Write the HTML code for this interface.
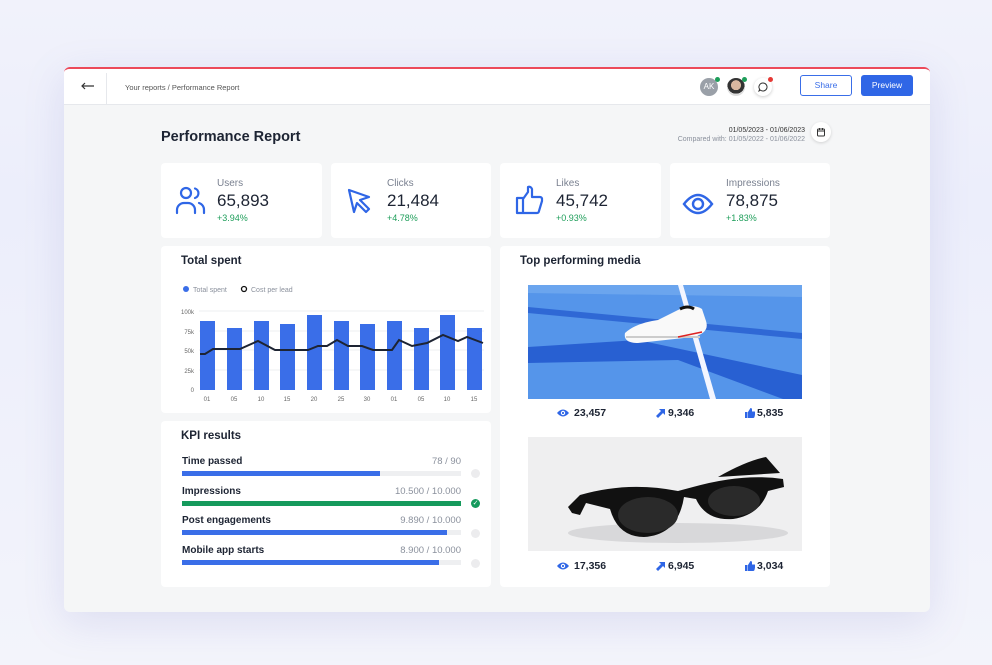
<!DOCTYPE html>
<html><head><meta charset="utf-8"><style>
*{margin:0;padding:0;box-sizing:border-box}
body{width:992px;height:665px;overflow:hidden;background:linear-gradient(180deg,#f1f2fb 0%,#eceefb 30%,#f3f4fb 100%);font-family:"Liberation Sans",sans-serif;position:relative;color:#1d2433}
.a{position:absolute}
.win{left:64px;top:67px;width:866px;height:545px;background:#f5f6f7;border-radius:6px;overflow:hidden;box-shadow:0 10px 40px rgba(120,120,200,.18);border-top:2px solid #ec4a5a}
.hdr{left:0;top:0;width:866px;height:36px;background:#fff;border-bottom:1px solid #e6e8ec}
.card{background:#fff;border-radius:4px}
.lbl{font-size:10px;color:#7a8190;line-height:13px}
.num{font-size:17px;color:#1d2433;line-height:22px;font-weight:500}
.pct{font-size:9px;color:#1e9e5a;line-height:12px}
.kt{font-size:10px;font-weight:bold;color:#1d2433}
.kv{font-size:9.5px;color:#8a909c}
.bar{height:5px;background:#eeeff1}
.fill{height:5px;background:#3a6ee8}
.dot{width:9px;height:9px;border-radius:50%;background:#ececee}
.st{font-size:10.5px;font-weight:bold;color:#1d2433;display:flex;align-items:center;gap:4px}
</style></head><body>
<div class="a win">
 <div class="a hdr">
  <svg class="a" style="left:17px;top:13px" width="13" height="8" viewBox="0 0 13 8"><path d="M1 4h12M4 1L1 4l3 3" fill="none" stroke="#333" stroke-width="1.2"/></svg>
  <div class="a" style="left:42px;top:4px;width:1px;height:32px;background:#e6e8ec"></div>
  <div class="a" style="left:61px;top:14px;font-size:7.5px;color:#555">Your reports / Performance Report</div>
  <div class="a" style="left:636px;top:9px;width:18px;height:18px;border-radius:50%;background:#9aa0a8;color:#fff;font-size:8px;text-align:center;line-height:18px">AK</div>
  <div class="a" style="left:651px;top:8px;width:5px;height:5px;border-radius:50%;background:#1e9e5a"></div>
  <div class="a" style="left:663px;top:9px;width:18px;height:18px;border-radius:50%;background:radial-gradient(circle at 50% 40%,#d9b8a0 0 35%,#333 36% 60%,#ddd 61%)"></div>
  <div class="a" style="left:678px;top:8px;width:5px;height:5px;border-radius:50%;background:#1e9e5a"></div>
  <div class="a" style="left:690px;top:9px;width:18px;height:18px;border-radius:50%;background:#fff;box-shadow:0 1px 3px rgba(0,0,0,.2)"></div>
  <svg class="a" style="left:694px;top:13px" width="10" height="10" viewBox="0 0 10 10"><path d="M5 1a4 4 0 1 1-2.5 7.1L1 9l.6-1.8A4 4 0 0 1 5 1z" fill="none" stroke="#333" stroke-width="1"/></svg>
  <div class="a" style="left:704px;top:8px;width:5px;height:5px;border-radius:50%;background:#e53935"></div>
  <div class="a" style="left:736px;top:6px;width:52px;height:21px;border:1px solid #3a6ee8;border-radius:3px;color:#3a6ee8;font-size:8.5px;text-align:center;line-height:19px">Share</div>
  <div class="a" style="left:797px;top:6px;width:52px;height:21px;background:#2f66e6;border-radius:3px;color:#fff;font-size:8.5px;text-align:center;line-height:21px">Preview</div>
 </div>
</div>
<div class="a" style="left:161px;top:129px;font-size:14.5px;font-weight:bold;color:#1d2433">Performance Report</div>
<div class="a" style="left:620px;top:126px;width:185px;text-align:right;font-size:7px;color:#333;line-height:9px">01/05/2023 - 01/06/2023<br><span style="color:#8a909c">Compared with: 01/05/2022 - 01/06/2022</span></div>
<div class="a" style="left:811px;top:122px;width:20px;height:20px;border-radius:50%;background:#fff;box-shadow:0 1px 3px rgba(0,0,0,.15)"></div>
<svg class="a" style="left:816px;top:127px" width="10" height="10" viewBox="0 0 10 10"><rect x="1.5" y="2" width="7" height="7" rx="1" fill="none" stroke="#333"/><path d="M1.5 4h7M3.5 1v2M6.5 1v2" stroke="#333"/></svg>

<div class="a card" style="left:161px;top:163px;width:161px;height:75px"></div>
<div class="a card" style="left:331px;top:163px;width:160px;height:75px"></div>
<div class="a card" style="left:500px;top:163px;width:161px;height:75px"></div>
<div class="a card" style="left:670px;top:163px;width:160px;height:75px"></div>
<svg class="a" style="left:174px;top:185px" width="34" height="30" viewBox="0 0 34 30" fill="none" stroke="#2f66e6" stroke-width="2.2" stroke-linecap="round"><circle cx="12" cy="8" r="5"/><path d="M3 28v-3a7 7 0 0 1 7-7h4a7 7 0 0 1 7 7v3"/><path d="M21 3.5a5 5 0 0 1 0 9.5M25 18a7 7 0 0 1 5 7v3"/></svg>
<svg class="a" style="left:346px;top:187px" width="28" height="28" viewBox="0 0 28 28" fill="none" stroke="#2f66e6" stroke-width="2.2" stroke-linejoin="round"><path d="M3 3l20 7-9 3 9 9-3 3-9-9-3 9z"/></svg>
<svg class="a" style="left:514px;top:185px" width="30" height="30" viewBox="0 0 30 30" fill="none" stroke="#2f66e6" stroke-width="2.2" stroke-linejoin="round"><path d="M3 13h6v15H3zM9 14l5-7V2a3 3 0 0 1 4 2v8h8a2 2 0 0 1 2 2v2l-3 10a2 2 0 0 1-2 2H9"/></svg>
<svg class="a" style="left:682px;top:190px" width="32" height="28" viewBox="0 0 32 28" fill="none" stroke="#2f66e6" stroke-width="2.4"><path d="M2 14Q16-4 30 14Q16 32 2 14z"/><circle cx="16" cy="14" r="5"/></svg>
<div class="a" style="left:217px;top:177px"><div class="lbl">Users</div><div class="num">65,893</div><div class="pct">+3.94%</div></div>
<div class="a" style="left:387px;top:177px"><div class="lbl">Clicks</div><div class="num">21,484</div><div class="pct">+4.78%</div></div>
<div class="a" style="left:556px;top:177px"><div class="lbl">Likes</div><div class="num">45,742</div><div class="pct">+0.93%</div></div>
<div class="a" style="left:726px;top:177px"><div class="lbl">Impressions</div><div class="num">78,875</div><div class="pct">+1.83%</div></div>

<div class="a card" style="left:161px;top:246px;width:330px;height:167px"></div>
<div class="a" style="left:181px;top:255px;font-size:11.5px;font-weight:bold">Total spent</div>
<svg class="a" style="left:161px;top:246px" width="330" height="167">
 <circle cx="25" cy="43" r="3" fill="#3a6ee8"/><text x="32" y="46" font-size="7" fill="#8a909c" font-family="Liberation Sans">Total spent</text>
 <circle cx="83" cy="43" r="2.5" fill="none" stroke="#111" stroke-width="1.3"/><text x="90" y="46" font-size="7" fill="#8a909c" font-family="Liberation Sans">Cost per lead</text>
 <g stroke="#eeeff1" stroke-width="1"><line x1="38" y1="65" x2="323" y2="65"/><line x1="38" y1="85" x2="323" y2="85"/><line x1="38" y1="104" x2="323" y2="104"/><line x1="38" y1="124" x2="323" y2="124"/></g>
 <g font-size="6" fill="#666" font-family="Liberation Sans" text-anchor="end"><text x="33" y="68">100k</text><text x="33" y="88">75k</text><text x="33" y="107">50k</text><text x="33" y="127">25k</text><text x="33" y="146">0</text></g>
 <g fill="#3a6ee8">
  <rect x="39" y="75" width="15" height="69"/><rect x="66" y="82" width="15" height="62"/><rect x="93" y="75" width="15" height="69"/><rect x="119" y="78" width="15" height="66"/><rect x="146" y="69" width="15" height="75"/><rect x="173" y="75" width="15" height="69"/><rect x="199" y="78" width="15" height="66"/><rect x="226" y="75" width="15" height="69"/><rect x="253" y="82" width="15" height="62"/><rect x="279" y="69" width="15" height="75"/><rect x="306" y="82" width="15" height="62"/>
 </g>
 <polyline fill="none" stroke="#1d2433" stroke-width="2" points="39,108 44,108 52,103 79,103 97,95 114,104 147,104 157,100 166,100 176,94 187,100 201,100 212,104 231,104 238,94 251,100 266,97 282,89 297,95 306,91 322,97"/>
 <g font-size="6" fill="#666" font-family="Liberation Sans" text-anchor="middle"><text x="46" y="155">01</text><text x="73" y="155">05</text><text x="100" y="155">10</text><text x="126" y="155">15</text><text x="153" y="155">20</text><text x="180" y="155">25</text><text x="206" y="155">30</text><text x="233" y="155">01</text><text x="260" y="155">05</text><text x="286" y="155">10</text><text x="313" y="155">15</text></g>
</svg>

<div class="a card" style="left:161px;top:421px;width:330px;height:166px"></div>
<div class="a" style="left:181px;top:430px;font-size:11.5px;font-weight:bold">KPI results</div>
<div class="a" style="left:182px;top:456px;width:279px">
 <div class="kt">Time passed<span class="kv" style="float:right;font-weight:normal">78 / 90</span></div>
 <div class="bar" style="margin-top:4px"><div class="fill" style="width:71%"></div></div>
</div>
<div class="a dot" style="left:471px;top:469px"></div>
<div class="a" style="left:182px;top:486px;width:279px">
 <div class="kt">Impressions<span class="kv" style="float:right;font-weight:normal">10.500 / 10.000</span></div>
 <div class="bar" style="margin-top:4px"><div class="fill" style="width:100%;background:#159a5c"></div></div>
</div>
<div class="a" style="left:471px;top:499px;width:9px;height:9px;border-radius:50%;background:#159a5c;color:#fff;font-size:7px;line-height:9px;text-align:center">✓</div>
<div class="a" style="left:182px;top:515px;width:279px">
 <div class="kt">Post engagements<span class="kv" style="float:right;font-weight:normal">9.890 / 10.000</span></div>
 <div class="bar" style="margin-top:4px"><div class="fill" style="width:95%"></div></div>
</div>
<div class="a dot" style="left:471px;top:529px"></div>
<div class="a" style="left:182px;top:545px;width:279px">
 <div class="kt">Mobile app starts<span class="kv" style="float:right;font-weight:normal">8.900 / 10.000</span></div>
 <div class="bar" style="margin-top:4px"><div class="fill" style="width:92%"></div></div>
</div>
<div class="a dot" style="left:471px;top:559px"></div>

<div class="a card" style="left:500px;top:246px;width:330px;height:341px"></div>
<div class="a" style="left:520px;top:255px;font-size:11.5px;font-weight:bold">Top performing media</div>
<svg class="a" style="left:528px;top:285px" width="274" height="114">
 <rect width="274" height="114" fill="#5595ea"/>
 <path d="M0 0H274V12L0 8z" fill="#7ab0f0" opacity=".6"/>
 <path d="M0 22L274 48V54L0 28z" fill="#1f55cc" opacity=".7"/>
 <path d="M0 62L110 55 274 90V114H255L150 75 0 78z" fill="#1d53cc" opacity=".8"/>
 <path d="M150 0h5l33 114h-6z" fill="#f4f6ff"/>
 <path d="M97 48Q108 38 130 35L150 25Q165 18 174 24L178 36Q182 48 165 52L110 58Q95 58 97 48z" fill="#f9f9f9"/>
 <path d="M152 24q8-4 14 0" stroke="#111" stroke-width="3" fill="none"/>
 <path d="M98 52H172" stroke="#ccc" stroke-width="2"/>
 <path d="M150 52l24-5" stroke="#d22" stroke-width="1.5"/>
</svg>
<svg class="a" style="left:528px;top:437px" width="274" height="114">
 <rect width="274" height="114" fill="#efeff0"/>
 <ellipse cx="150" cy="96" rx="110" ry="10" fill="#d8d8da"/>
 <path d="M40 70L52 58Q100 44 150 54L165 50Q215 36 255 42L256 50L240 54Q232 78 205 82Q178 84 168 62L156 60Q150 98 116 100Q90 100 82 72L58 66L52 78L44 76z" fill="#111"/>
 <path d="M190 40Q218 24 238 20L252 36z" fill="#111"/>
 <ellipse cx="120" cy="78" rx="30" ry="18" fill="#2a2a2a"/>
 <ellipse cx="206" cy="64" rx="26" ry="15" fill="#2a2a2a"/>
</svg>
<div class="a st" style="left:556px;top:407px"><svg width="14" height="10" viewBox="0 0 14 10"><path d="M1 5Q7-2 13 5Q7 12 1 5z" fill="#2f66e6"/><circle cx="7" cy="5" r="2.2" fill="#fff"/><circle cx="7" cy="5" r="1.1" fill="#2f66e6"/></svg>23,457</div>
<div class="a st" style="left:656px;top:407px;gap:2px"><svg width="10" height="10" viewBox="0 0 10 10"><path d="M3 1h6v6L7 5 2 10 0 8l5-5z" fill="#2f66e6"/></svg>9,346</div>
<div class="a st" style="left:745px;top:407px;gap:2px"><svg width="10" height="10" viewBox="0 0 10 10"><path d="M0 4h2.5v6H0zM3 4l2.5-4q1.5 0 1.5 1.5V3.5h2.5q1 0 1 1L9.5 9q-.3 1-1.3 1H3z" fill="#2f66e6"/></svg>5,835</div>
<div class="a st" style="left:556px;top:560px"><svg width="14" height="10" viewBox="0 0 14 10"><path d="M1 5Q7-2 13 5Q7 12 1 5z" fill="#2f66e6"/><circle cx="7" cy="5" r="2.2" fill="#fff"/><circle cx="7" cy="5" r="1.1" fill="#2f66e6"/></svg>17,356</div>
<div class="a st" style="left:656px;top:560px;gap:2px"><svg width="10" height="10" viewBox="0 0 10 10"><path d="M3 1h6v6L7 5 2 10 0 8l5-5z" fill="#2f66e6"/></svg>6,945</div>
<div class="a st" style="left:745px;top:560px;gap:2px"><svg width="10" height="10" viewBox="0 0 10 10"><path d="M0 4h2.5v6H0zM3 4l2.5-4q1.5 0 1.5 1.5V3.5h2.5q1 0 1 1L9.5 9q-.3 1-1.3 1H3z" fill="#2f66e6"/></svg>3,034</div>
</body></html>
